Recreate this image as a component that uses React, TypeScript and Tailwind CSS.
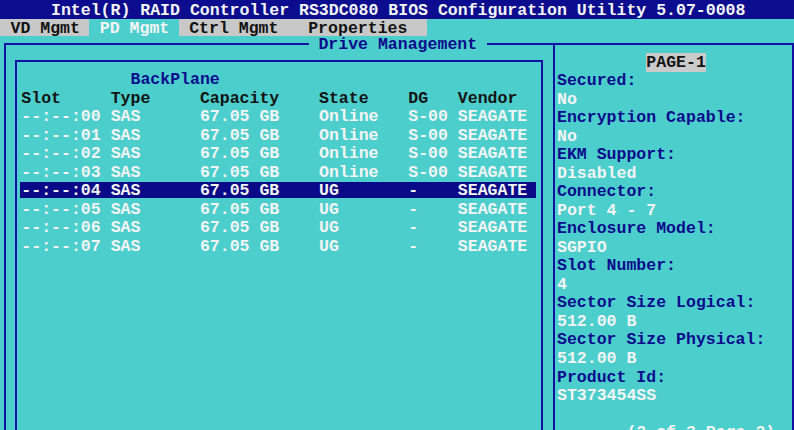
import React from 'react';

// 80x25 text-mode screen: one column is 794 / 80 = 9.925px, body rows are 18.53px
const NAVY = 'text-[#0b0b8c]';
const WHITE = 'text-[#f4f4f4]';

type Drive = { slot: string; state: string; dg: string; selected?: boolean };

const drives: Drive[] = [
    { slot: '00', state: 'Online', dg: 'S-00' },
    { slot: '01', state: 'Online', dg: 'S-00' },
    { slot: '02', state: 'Online', dg: 'S-00' },
    { slot: '03', state: 'Online', dg: 'S-00' },
    { slot: '04', state: 'UG', dg: '-', selected: true },
    { slot: '05', state: 'UG', dg: '-' },
    { slot: '06', state: 'UG', dg: '-' },
    { slot: '07', state: 'UG', dg: '-' },
];

const props: [string, string][] = [
    ['Secured:', 'No'],
    ['Encryption Capable:', 'No'],
    ['EKM Support:', 'Disabled'],
    ['Connector:', 'Port 4 - 7'],
    ['Enclosure Model:', 'SGPIO'],
    ['Slot Number:', '4'],
    ['Sector Size Logical:', '512.00 B'],
    ['Sector Size Physical:', '512.00 B'],
    ['Product Id:', 'ST373454SS'],
];

const driveLine = (d: Drive) =>
    `--:--:${d.slot} SAS      67.05 GB    ${d.state.padEnd(9)}${d.dg.padEnd(5)}SEAGATE`.padEnd(52);

const App = () => {
    return (
        <div className="w-[794px] h-[430px] overflow-hidden bg-[#4ccfcc] font-['Liberation_Mono',monospace] text-[16.54px] font-bold leading-[18.53px] whitespace-pre">
            {/* Title bar */}
            <div className={`h-[19px] leading-[16px] pt-[3px] bg-[#0c0c8e] pl-[51px] ${WHITE}`}>
                Intel(R) RAID Controller RS3DC080 BIOS Configuration Utility 5.07-0008
            </div>

            {/* Menu bar */}
            <div className="flex h-[17px] leading-[15px] text-[#121212]">
                <div className="w-[89.33px] pt-[2px] bg-[#c8c8c8] pl-[10.5px]">VD Mgmt</div>
                <div className={`w-[89.33px] pt-[2px] pl-[10.5px] ${WHITE}`}>PD Mgmt</div>
                <div className="w-[248.13px] pt-[2px] bg-[#c8c8c8] pl-[10.5px]">Ctrl Mgmt   Properties</div>
            </div>

            {/* Drive Management frame */}
            <div className="relative flex ml-[4px] mt-[7px] w-[790px] h-[400px] border-2 border-b-0 border-[#1212a0]">
                <span className={`absolute left-[302.5px] top-[-9px] bg-[#4ccfcc] ${NAVY}`}> Drive Management </span>

                {/* Left: drive table */}
                <div className="w-[547px]">
                    <div className="ml-[8.5px] mt-[15px] w-[528.5px] h-[400px] border-2 border-b-0 border-[#1212a0] pl-[3.35px] pt-[9px]">
                        <div className={`pl-[1.5px] ${NAVY}`}>{'           BackPlane'}</div>
                        <div className="pl-[1.5px] text-[#141414]">Slot     Type     Capacity    State    DG   Vendor</div>
                        {drives.map((d) =>
                            d.selected ? (
                                <div key={d.slot} className={`w-[516.1px] h-[16px] mb-[2.53px] pl-[1.5px] bg-[#0a0a88] ${WHITE}`}>
                                    {driveLine(d)}
                                </div>
                            ) : (
                                <div key={d.slot} className={`pl-[1.5px] ${WHITE}`}>{driveLine(d)}</div>
                            )
                        )}
                    </div>
                </div>

                {/* Right: properties panel */}
                <div className="flex-1 border-l-2 border-[#1212a0] pl-[2px] pt-[8.53px]">
                    <div className="text-[#141414]">
                        {'         '}
                        <span className="bg-[#cacaca]">PAGE-1</span>
                    </div>
                    {props.map(([label, value]) => (
                        <React.Fragment key={label}>
                            <div className={NAVY}>{label}</div>
                            <div className={WHITE}>{value}</div>
                        </React.Fragment>
                    ))}
                    <div>&nbsp;</div>
                    <div className={WHITE}>{'       (2 of 3 Page 2)'}</div>
                </div>
            </div>
        </div>
    );
};

export default App;
